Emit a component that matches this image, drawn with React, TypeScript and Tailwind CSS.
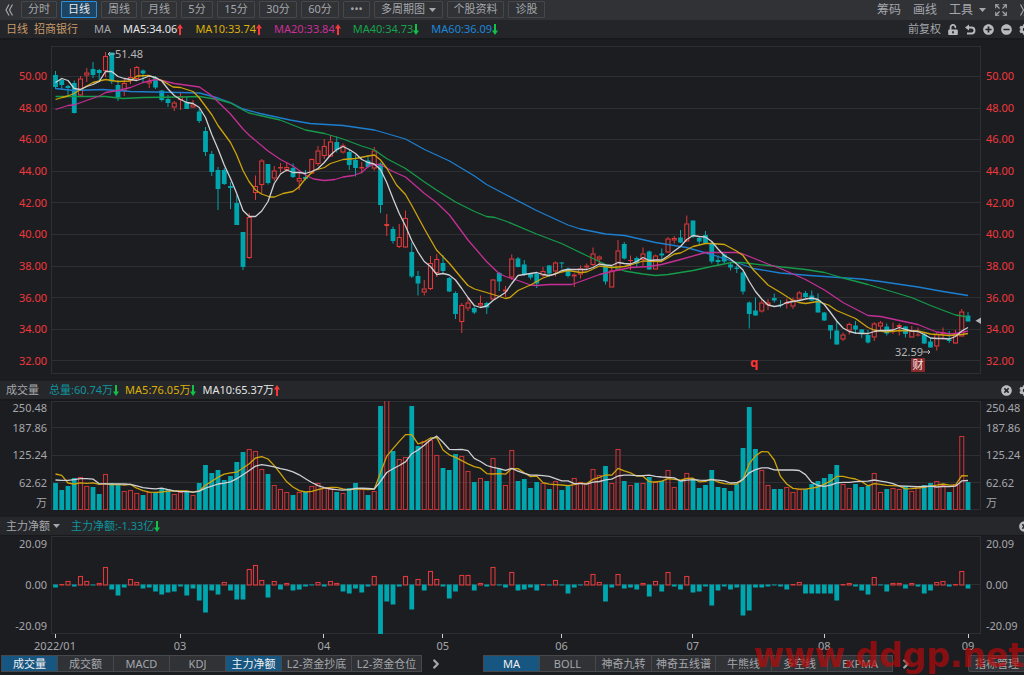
import React, { FC, ReactNode } from "react";
import { ChevronRight, Expand } from "lucide-react";
import { FaCog, FaMinusCircle, FaPlusCircle, FaTimesCircle, FaUnlockAlt } from "react-icons/fa";

const STEP = 6.25;
const FIRST = 55.5;
const LEFT = 51;
const WIDTH = 930;
const TEAL = "#00a6ae";
const RED = "#dd393b";

const xAt = (i: number) => FIRST + i * STEP;
const percent = (x: number) => `${((x - LEFT) / WIDTH) * 100}%`;

// high, body top, body bottom, low; "u" is a rising day, "d" a falling one
const candles = `
d71,75,87,89 d78,80,85,90 d85,86,88,97 d80.5,83,113,113.5 u76,78.5,95.5,97 u68,72.5,75.5,82 d62,69,75,78 d69,70,73,82
u52,56,71,77 d52.5,52.5,81.5,84 d80,85,97,101 u79,83,91,96 u68.5,77,81,84 u66,67,79,80 d69.5,70.5,73.5,83 u78,81,83.5,88
d76,77.5,87.5,89 d90.5,90.5,100,101.5 d95,99,103,107 u101,102.5,107.5,111 u93,96,100,110 d97,102,109,109 u100,104.5,107.5,108 d109,111.5,121,123
d127,131,152,156 d151,154,172,176 d167,170,189,210 d168,170,184,185 d182,186,188,209 d195,203,225,225 d232,232,267,270 u213,217,258,259
u175.5,186,193,200 u159,160.5,185,194 d164,164,183,184.5 u166,170.5,178.5,181 u163,167,168.5,172.5 u162,167,170,172 d163.5,168,177,178 u172,178,181.5,190
d170,177,179,180.5 u158.5,159,173.5,174 u146,150.5,164,166 u139,146,156,159 u135.5,141.5,156.5,157 d136.5,142,150,152.5 u143.5,145.5,152.5,153.5 d150,152,165,170
d155,160,168,176.5 u162,167,168.5,173.5 d155.5,160.5,167,168 u147,150.5,168.5,170.5 d162.5,163.5,205,213 u214,224,226,236 d226.5,229,241,243.5 u224,237,247,248
u210.5,218,247.5,248 d242.5,252,276.5,278 d271,276,283.5,295.5 u280,288.5,292.5,295.5 u256,263,289,290 u254,259,273,277 d255,263,271,273.5 d277,278,291.5,292
d291.5,293,314,319 u303,305,322,333 u297,302.5,308.5,311 d306,308,312.5,314 u295.5,303,305.5,307 d302,303,307.5,314 u279,279.5,299.5,300 d272,273,281.5,291
u286,289.5,291.5,297 u254.5,258.5,277.5,280 d257,258.5,267,267.5 d260,264.5,274.5,276 d273,274,277.5,279.5 d272.5,273.5,283.5,288 u267,271,275.5,277 d265,265.5,273.5,276.5
u261.5,262.5,271.5,276.5 d262,262.5,263.5,268.5 d267.5,268.5,276,277.5 u273.5,274.5,276.5,287 u265.5,268.5,274.5,278.5 u263.5,265.5,267.5,270.5 u247.5,253.5,265,266 u255.5,256.5,259.5,263.5
d264.5,265.5,281.5,284.5 u267.5,270.5,287.5,287.5 u240,250.5,270.5,271 d242,244,258.5,259.5 u255.5,260,261,270 d256.5,258,263.5,267 u247.5,253.5,260,266 d250.5,251.5,269.5,269.5
u254.5,255.5,269.5,269.5 d248.5,253.5,255.5,259 u237,238.5,252.5,253 u236,238,240.5,243.5 d230,237.5,242.5,243 u215.5,223.5,241.5,242 d220.5,220.5,236.5,238 d236,238,241.5,244.5
d231,235,243,244 d241,243.5,261.5,263.5 d255.5,260,262,265 d253.5,254.5,261.5,263.5 d262.5,264.5,267.5,270.5 d265.5,267.5,269,273 d271,272.5,291.5,294.5 d301.5,302.5,314,328.5
d297.5,310.5,315.5,315.5 u299.5,302.5,311.5,312.5 u299,302.5,305,310 d293.5,298,300.5,302.5 d300,304.5,305.5,307.5 u298.5,302,304,308.5 u297.5,299.5,306.5,309 u291,292.5,299.5,301
d291,293,297,298.5 d290.5,295.5,300.5,301 d293.5,300,312.5,312.5 d312,312.5,320.5,321 d325,325,330.5,339 d321.5,330.5,344.5,344.5 u332.5,334.5,339.5,341 u322.5,324,330.5,334.5
d321,325.5,329.5,334 d329,329.5,333.5,338 d330,335,342.5,343.5 u322,323.5,337.5,341 u321,322.5,326.5,330 d323.5,326.5,333.5,335.5 u322.5,330.5,332,334 u323.5,325,327,335.5
d326,326.5,334,337.5 u326,330.5,337.5,337.5 u327.5,334.5,335.5,336.5 d332.5,334.5,343.5,344 d338,341.5,347.5,347.5 u332.5,334,346.5,350.5 u327.5,332.5,334,339.5 d331,339.5,341,343
u330,333.5,343.5,344 u309,311.5,336.5,336.5 d312,315.5,321.5,321.5`
  .trim()
  .split(/\s+/)
  .map((s) => {
    const [high, top, bottom, low] = s.slice(1).split(",").map(Number);
    return { up: s[0] === "u", high, top, bottom, low };
  });

const ma5 = [
  82.5, 78.5, 80.5, 88.5, 89.5, 86.5, 84.5, 81.5, 71.5, 71.5, 76.5, 78.5, 79.5, 80.5, 78.5, 76, 77.5, 81, 89, 95.5,
  99.5, 102.5, 103.5, 107.5, 117.5, 134.5, 149, 165, 178.5, 193.5, 210.5, 216.5, 216.5, 211, 201.5, 183.5, 174, 170, 172.5, 172.5,
  173.5, 171.5, 168.5, 162.5, 155, 149.5, 146.5, 149.5, 153.5, 159.5, 162.5, 164, 169.5, 182.5, 198.5, 213.5, 226, 240.5, 252, 261.5,
  266.5, 274.5, 273.5, 275, 280, 288.5, 297.5, 305.5, 307.5, 306, 300.5, 296.5, 292.5, 283.5, 275.5, 274.5, 273.5, 272.5, 274.5, 275.5,
  274, 270.5, 269.5, 269.5, 269.5, 269.5, 267.5, 264, 265, 265.5, 262.5, 263.5, 264, 261.5, 257.5, 260.5, 260, 260, 256, 251,
  246.5, 239.5, 235.5, 236.5, 237, 241.5, 249, 255.5, 259, 264, 270, 281.5, 291.5, 299, 305, 306.5, 305.5, 302.5, 301.5, 300.5,
  299, 298, 299.5, 304.5, 312.5, 321, 328, 331.5, 333, 333.5, 333.5, 331.5, 330.5, 330.5, 330, 327.5, 329.5, 331, 331.5, 334.5,
  338, 338.5, 338.5, 339, 336.5, 331, 327.5,
];

const ma10 =
  "55.5,99.5 62,97.5 68,96 74,93.5 80.5,89.5 93,82.5 105.5,79.5 118,81.5 130,81 137,76 149,75.5 162,80.5 173,87 180.5,87.5 193,91.5 199,97.5 212,115 218,125.5 230.5,142.5 236.5,154.5 243,170.5 249,181.5 255.5,190 261.5,194 270,197 274.5,197 283,193.5 293,191.5 299,187 305.5,178.5 314,170.5 324.5,167.5 330.5,163.5 343,159.5 355.5,158.5 368,156 374.5,155 380.5,160 387,168.5 396.5,185 405.5,194.5 411.5,205 424.5,229 436.5,250 449.5,263.5 461.5,278 468,285.5 474.5,289 486.5,292.5 499.5,296.5 505.5,298.5 510,297.5 518,290.5 530.5,285 543,278 555.5,273.5 568,270.5 580.5,272.5 586.5,272 599.5,266 611.5,267.5 624.5,266.5 630.5,265 643,261 661.5,261.5 674.5,254 680.5,253 693,246.5 705.5,243.5 711.5,243.5 724.5,244.5 736.5,251 743,255.5 753.5,270 768,285 780.5,292.5 793,300.5 799,302.5 805.5,303.5 818,301.5 828.5,305 836.5,310.5 855.5,318.5 868,327.5 874,330 886.5,332 899.5,330.5 918,331 930.5,334 949.5,335.5 961.5,334.5 968,333.5";
const ma20 =
  "55.5,109.5 68,105.5 74,105 86.5,100.5 99.5,96 105.5,92.5 118,90.5 130.5,87.5 143,82.5 155.5,79.5 162,80.5 174.5,83.5 199.5,87 211.5,95.5 230.5,114 243,129 249.5,135.5 268,151 280.5,159.5 293,166 305.5,175 313.5,179 324.5,180.5 335,179.5 343,177 353.5,175.5 361.5,172.5 370,165 380.5,164.5 393,171.5 405.5,177 424.5,193.5 436.5,202.5 449.5,215 468,240 486.5,261.5 499,273.5 505.5,276.5 518,280.5 530.5,285 536.5,285.5 549.5,284.5 571.5,284.5 580.5,281.5 599.5,274.5 611.5,271.5 630.5,267.5 649.5,266.5 661.5,264.5 680.5,259.5 705.5,252.5 718,252.5 736.5,252.5 743,254 768,264 780.5,268.5 805.5,279.5 824.5,290 843,302.5 868,315.5 880.5,316.5 918,324.5 936.5,332 951.5,334 961.5,332.5 968,331";
const ma40 =
  "55.5,96.5 105.5,96.5 123,98.5 143,97.5 180.5,97 199.5,96.5 218,99.5 230.5,103 243,110 249,113 260,115.5 280,120 305.5,130 324.5,133.5 343,139 361.5,146 374.5,150 386.5,158.5 405.5,168.5 424.5,182 436.5,190 455.5,202 474.5,211.5 486.5,216.5 495,217.5 505.5,221 536.5,234 561.5,243.5 586.5,255.5 605.5,264.5 624.5,271 643,274 655.5,275.5 668,274.5 693,270.5 711.5,266.5 731.5,262.5 741,262.5 768,265.5 805.5,269.5 824.5,272.5 843,278 868,284.5 911.5,297.5 930.5,305.5 955.5,315 968,317";
const ma60 =
  "55.5,88.5 74,90.5 103,89.5 130.5,91.5 180.5,92.5 199.5,93 218,98 230.5,102.5 243,109 260,113.5 290,120 310,123.5 343,125.5 374.5,130 390,134.5 405.5,139 424.5,149.5 449.5,161 474.5,176 486.5,184.5 505.5,194.5 536.5,210.5 568,225 580.5,229 605.5,234 624.5,235.5 655.5,242.5 686.5,247.5 711.5,254.5 736.5,262.5 753.5,268.5 780,273 809.5,275.5 861.5,279 880.5,281.5 918,287 943,291.5 968,295.5";

const volumes = [
  27, 20, 24, 32, 33, 24, 23, 16, 36, 27, 26, 19, 20, 17, 15, 18, 18, 22, 21, 16, 18, 19, 15, 27, 45, 37, 40, 30, 34, 48,
  58, 61, 59, 41, 36, 25, 21, 18, 15, 18, 18, 24, 27, 22, 22, 18, 17, 22, 27, 21, 15, 19, 104, 110, 59, 51, 53, 104, 64, 69,
  70, 55, 42, 40, 56, 54, 39, 28, 32, 29, 52, 41, 25, 60, 29, 31, 22, 28, 27, 21, 29, 20, 25, 32, 28, 27, 41, 35, 44, 27,
  61, 29, 25, 27, 27, 33, 28, 29, 40, 23, 29, 37, 30, 22, 25, 40, 23, 22, 19, 26, 62, 103, 61, 40, 25, 21, 21, 23, 18, 21,
  21, 26, 29, 32, 36, 45, 26, 22, 26, 23, 24, 37, 18, 21, 22, 21, 24, 19, 24, 25, 27, 29, 25, 18, 26, 74, 28,
];
// days before the first visible one, needed for the averages
const earlier = [24, 24, 24, 24, 24, 27, 62, 37, 27];

const flows = [
  -3, 1, 4, -2, 9, 4, -1, 2, 18, -5, -11, -3, 6, 3, -4, -3, -7, -10, -8, -7, -2, -11, -4, -16, -28, -6, -10, 3, -6, -15,
  -15, 16, 20, 5, -13, 4, -5, 2, -6, -5, -2, -1, 3, -2, 4, 2, -7, -9, -4, -8, -2, 9, -50, -17, -20, -2, 9, -25, 6, -6,
  14, 6, -2, -14, -7, 10, 10, -6, 2, -2, 18, -1, -3, 13, -6, -5, -3, -6, 1, -1, 5, -1, -9, -3, -1, 4, 11, 3, -17, -3,
  11, -4, -3, -5, 2, -12, 4, -7, 13, -2, -5, 9, -8, -7, -2, -21, -6, -2, -5, -3, -31, -26, -3, -3, -2, -1, -2, -5, 1, 3,
  -9, -9, -9, -9, -9, -16, 1, 2, -2, -6, -10, 8, -1, -7, 2, 2, -4, 2, -2, -9, -6, 3, 4, -2, 1, 14, -4,
];

const linePoints = (ys: number[]) => ys.map((y, i) => `${xAt(i)},${y}`).join(" ");

const average = (days: number) => {
  const all = [...earlier, ...volumes];
  return volumes.map((_, i) => {
    const end = i + earlier.length + 1;
    return 510 - all.slice(end - days, end).reduce((a, b) => a + b, 0) / days;
  });
};

interface LineProps {
  points: string;
  color: string;
}

const Line: FC<LineProps> = ({ points, color }) => (
  <polyline points={points} fill="none" stroke={color} strokeWidth="1.3" strokeLinejoin="round" vectorEffect="non-scaling-stroke" />
);

interface BarProps {
  i: number;
  top: number;
  bottom: number;
  up: boolean;
  color?: string;
}

const Bar: FC<BarProps> = ({ i, top, bottom, up, color = RED }) => {
  const height = Math.max(bottom - top, 1);
  if (up && height > 2) {
    return <rect x={xAt(i) - 2} y={top + 0.5} width="4" height={height - 1} fill="none" stroke={color} strokeWidth="1.1" />;
  }
  return <rect x={xAt(i) - 2.4} y={top} width="4.8" height={height} fill={up ? RED : TEAL} />;
};

interface PlotProps {
  top: number;
  height: number;
  grid: number[];
  className: string;
  children: ReactNode;
}

const Plot: FC<PlotProps> = ({ top, height, grid, className, children }) => (
  <svg className={`block w-full ${className}`} viewBox={`${LEFT} ${top} ${WIDTH} ${height}`} preserveAspectRatio="none">
    {grid.map((y) => (
      <path key={y} d={`M${LEFT} ${y}H${LEFT + WIDTH}`} stroke="#2e2f33" />
    ))}
    <rect x={LEFT + 0.5} y={top + 0.5} width={WIDTH - 1} height={height - 1} fill="none" stroke="#2e2f33" />
    {children}
  </svg>
);

const Arrow: FC<{ up?: boolean }> = ({ up }) => (
  <svg viewBox="0 0 6 11" className={up ? "h-[11px] w-1.5 text-[#f5383a]" : "h-[11px] w-1.5 rotate-180 text-[#12c04a]"}>
    <path d="M3 0L6 4.5H4V11H2V4.5H0z" fill="currentColor" />
  </svg>
);

const Caret = () => (
  <svg viewBox="0 0 7 4" className="h-1 w-[7px]">
    <path d="M0 0H7L3.5 4z" fill="currentColor" />
  </svg>
);

const DoubleChevron: FC<{ className?: string }> = ({ className = "" }) => (
  <svg viewBox="0 0 8 12" className={`block h-3 w-2 ${className}`}>
    <path d="M4 .5L1 6L4 11.5M7.5 .5L4.5 6L7.5 11.5" fill="none" stroke="currentColor" strokeWidth="1.2" />
  </svg>
);

const UndoIcon = () => (
  <svg viewBox="0 0 11 11" className="block h-[11px] w-[11px]">
    <path d="M0 3.5L4 .5V6.5z" fill="currentColor" />
    <path d="M3 3.5H6.5A2.9 2.9 0 0 1 6.5 9.5H2" fill="none" stroke="currentColor" strokeWidth="1.9" />
  </svg>
);

const Value: FC<{ className: string; up?: boolean; children: ReactNode }> = ({ className, up, children }) => (
  <span className="flex items-center">
    <span className={className}>{children}</span>
    <Arrow up={up} />
  </span>
);

const periods = [
  { name: "分时", width: "w-9" },
  { name: "日线", width: "w-9", active: true },
  { name: "周线", width: "w-9" },
  { name: "月线", width: "w-9" },
  { name: "5分", width: "w-8" },
  { name: "15分", width: "w-[38px]" },
  { name: "30分", width: "w-[38px]" },
  { name: "60分", width: "w-[38px]" },
  { name: "•••", width: "w-[27px]" },
  { name: "多周期图", width: "w-[69px]", menu: true },
  { name: "个股资料", width: "w-[57px]" },
  { name: "诊股", width: "w-[37px]" },
];

const Toolbar = () => (
  <div className="flex h-5 items-start justify-between overflow-hidden bg-[#303236] pt-px">
    <div className="flex shrink-0 items-center gap-1">
      <button aria-label="收起" className="flex w-[17px] justify-center">
        <DoubleChevron />
      </button>
      {periods.map((p) => (
        <button
          key={p.name}
          className={`flex h-[17px] items-center justify-center gap-1 rounded-[1px] border ${p.width} ${
            p.active ? "border-[#2390e0] bg-[#1d4463] text-[#e8e8e8]" : "border-[#45474b]"
          }`}
        >
          {p.name}
          {p.menu && <Caret />}
        </button>
      ))}
    </div>
    <div className="-mr-1 flex h-[17px] shrink-0 items-center gap-3 text-xs">
      <button>筹码</button>
      <button>画线</button>
      <div className="flex items-center gap-2">
        <button className="flex items-center gap-1.5">
          工具 <Caret />
        </button>
        <button aria-label="全屏">
          <Expand className="block h-3.5 w-3.5" strokeWidth={2} />
        </button>
      </div>
      <button aria-label="展开">
        <DoubleChevron className="rotate-180" />
      </button>
    </div>
  </div>
);

const Averages = () => (
  <div className="flex h-5 items-center justify-between overflow-hidden border-b-2 border-[#18191c] bg-[#232529]">
    <div className="flex items-center gap-3 pl-1.5">
      <span className="flex gap-1.5 text-[#c79a68]">
        <span>日线</span>
        <span>招商银行</span>
      </span>
      <span className="ml-1">MA</span>
      <Value className="text-[#e4e4e4]" up>MA5:34.06</Value>
      <Value className="text-[#dcb007]" up>MA10:33.74</Value>
      <Value className="text-[#cb2f98]" up>MA20:33.84</Value>
      <Value className="text-[#16a34a]">MA40:34.73</Value>
      <Value className="text-[#1f86d8]">MA60:36.09</Value>
    </div>
    <div className="-mr-1.5 flex items-center gap-[7px] text-[#b8babd]">
      <button className="text-[#a5a7ab]">前复权</button>
      <button aria-label="锁定"><FaUnlockAlt className="block h-[11px] w-2.5" /></button>
      <button aria-label="撤销"><UndoIcon /></button>
      <button aria-label="放大"><FaPlusCircle className="block h-[11px] w-[11px]" /></button>
      <button aria-label="缩小"><FaMinusCircle className="block h-[11px] w-[11px]" /></button>
      <button aria-label="设置"><FaCog className="block h-[11px] w-[11px]" /></button>
    </div>
  </div>
);

const prices = ["50.00", "48.00", "46.00", "44.00", "42.00", "40.00", "38.00", "36.00", "34.00", "32.00"];

const PriceLabels: FC<{ className: string }> = ({ className }) => (
  <div className={`flex shrink-0 flex-col justify-between pt-[22px] pb-[5px] leading-4 text-[#f0383c] ${className}`}>
    {prices.map((p) => (
      <span key={p}>{p}</span>
    ))}
  </div>
);

const PriceChart = () => (
  <div className="flex pt-1.5">
    <PriceLabels className="w-[51px] pr-1 text-right" />
    <div className="relative min-w-0 flex-1">
      <Plot top={46} height={328} grid={prices.map((_, i) => Math.round(76 + i * 31.6) + 0.5)} className="h-[328px]">
        {candles.map((c, i) => (
          <g key={i}>
            <path
              d={c.up ? `M${xAt(i)} ${c.high}V${c.top}M${xAt(i)} ${c.bottom}V${c.low}` : `M${xAt(i)} ${c.high}V${c.low}`}
              stroke={c.up ? RED : TEAL}
            />
            <Bar i={i} top={c.top} bottom={c.bottom} up={c.up} />
          </g>
        ))}
        <Line points={ma60} color="#1c7fd0" />
        <Line points={ma40} color="#159b49" />
        <Line points={ma20} color="#c42f95" />
        <Line points={ma10} color="#cda30c" />
        <Line points={linePoints(ma5)} color="#cfd0d3" />
        <path d="M981 317.5V324L975.5 320.8z" fill="#b0b2b5" />
      </Plot>
      <span className="absolute top-0 flex items-center leading-4 text-[#b4b6b9]" style={{ left: percent(107) }}>
        <svg viewBox="0 0 8 6" className="h-1.5 w-2">
          <path d="M8 3H1M3 1L1 3L3 5" fill="none" stroke="currentColor" />
        </svg>
        51.48
      </span>
      <span className="absolute top-[298px] flex items-center leading-4 text-[#b4b6b9]" style={{ left: percent(895) }}>
        32.59
        <svg viewBox="0 0 8 6" className="h-1.5 w-2">
          <path d="M0 3H7M5 1L7 3L5 5" fill="none" stroke="currentColor" />
        </svg>
      </span>
      <span className="absolute top-[308px] text-[13px] leading-4 font-bold text-[#ff3333]" style={{ left: percent(750) }}>
        q
      </span>
      <span
        className="absolute top-[312px] flex h-3.5 w-3.5 items-center justify-center rounded-[1px] bg-[#8b2a2c] text-[#f0e4e4]"
        style={{ left: percent(911) }}
      >
        财
      </span>
    </div>
    <PriceLabels className="w-[43px] pl-[5px]" />
  </div>
);

const VolumeLabels: FC<{ className: string }> = ({ className }) => (
  <div className={`grid shrink-0 grid-rows-[14px_26px_28px_27px_14px] items-center leading-4 ${className}`}>
    {["250.48", "187.86", "125.24", "62.62", "万"].map((v) => (
      <span key={v}>{v}</span>
    ))}
  </div>
);

const VolumeChart = () => (
  <section>
    <div className="mt-[7px] flex h-5 items-center justify-between overflow-hidden border-b-2 border-[#18191c] bg-[#25272b]">
      <div className="flex items-center pl-1.5">
        <span className="w-[43px]">成交量</span>
        <span className="flex gap-1.5">
          <Value className="text-[#0f949c]">总量:60.74万</Value>
          <Value className="text-[#dcb007]">MA5:76.05万</Value>
          <Value className="text-[#e4e4e4]" up>MA10:65.37万</Value>
        </span>
      </div>
      <div className="-mr-1.5 flex gap-[7px] text-[#b8babd]">
        <button aria-label="关闭成交量"><FaTimesCircle className="block h-[11px] w-[11px]" /></button>
        <button aria-label="成交量设置"><FaCog className="block h-[11px] w-[11px]" /></button>
      </div>
    </div>
    <div className="flex">
      <VolumeLabels className="w-[51px] pr-1 text-right" />
      <div className="min-w-0 flex-1">
        <Plot top={401} height={109} grid={[427.5, 455.5, 482.5]} className="h-[109px]">
          {volumes.map((v, i) => (
            <Bar key={i} i={i} top={510 - v} bottom={510} up={candles[i].up} color="#c43436" />
          ))}
          <Line points={linePoints(average(5))} color="#cda30c" />
          <Line points={linePoints(average(10))} color="#cfd0d3" />
        </Plot>
      </div>
      <VolumeLabels className="w-[43px] pl-[5px]" />
    </div>
  </section>
);

const FlowLabels: FC<{ className: string }> = ({ className }) => (
  <div className={`flex shrink-0 flex-col justify-between leading-4 ${className}`}>
    <span>20.09</span>
    <span>0.00</span>
    <span>-20.09</span>
  </div>
);

const months = [
  { name: "2022/01", days: 20 },
  { name: "03", days: 23 },
  { name: "04", days: 19 },
  { name: "05", days: 19 },
  { name: "06", days: 21 },
  { name: "07", days: 21 },
  { name: "08", days: 23 },
  { name: "09", days: 0 },
];

const FlowChart = () => (
  <section>
    <div className="mt-[7px] flex h-[19px] items-center justify-between overflow-hidden border-b border-[#18191c] bg-[#25272b]">
      <div className="flex items-center gap-[11px] pl-1.5">
        <button className="flex items-center gap-[3px]">
          主力净额 <Caret />
        </button>
        <Value className="text-[#0f949c]">主力净额:-1.33亿</Value>
      </div>
      <button aria-label="关闭主力净额" className="-mr-1.5 text-[#b8babd]">
        <FaTimesCircle className="block h-[11px] w-[11px]" />
      </button>
    </div>
    <div className="flex">
      <FlowLabels className="w-[51px] pr-1 text-right" />
      <div className="min-w-0 flex-1">
        <Plot top={536} height={98} grid={[584.5]} className="h-[98px]">
          {flows.map((v, i) => (
            <Bar key={i} i={i} top={v > 0 ? 585 - v : 584.5} bottom={v > 0 ? 585.5 : 584.5 - v} up={v > 0} />
          ))}
        </Plot>
      </div>
      <FlowLabels className="w-[43px] pl-[5px]" />
    </div>
    <div className="flex h-[21px] pr-14 pl-[55px]">
      {months.map((m) => (
        <div key={m.name} className="flex" style={{ flexGrow: m.days, flexBasis: 0 }}>
          <div className="flex w-0 flex-col items-center">
            <span className="h-1 w-px shrink-0 bg-[#d0d1d3]" />
            <span className="leading-4 whitespace-nowrap">{m.name}</span>
          </div>
        </div>
      ))}
    </div>
  </section>
);

const panels = [
  { name: "成交量", width: "w-14", active: true },
  { name: "成交额", width: "w-14" },
  { name: "MACD", width: "w-14" },
  { name: "KDJ", width: "w-14" },
  { name: "主力净额", width: "w-14", active: true },
  { name: "L2-资金抄底", width: "w-[70px]" },
  { name: "L2-资金仓位", width: "w-[70px]" },
];

const overlays = [
  { name: "MA", width: "w-14", active: true },
  { name: "BOLL", width: "w-14" },
  { name: "神奇九转", width: "w-14" },
  { name: "神奇五线谱", width: "w-16" },
  { name: "牛熊线", width: "w-14" },
  { name: "多空线", width: "w-14" },
  { name: "EXPMA", width: "w-[65px]" },
];

const Tabs: FC<{ items: { name: string; width: string; active?: boolean }[] }> = ({ items }) => (
  <div className="flex shrink-0 border-y border-l border-[#46484c]">
    {items.map((t) => (
      <button
        key={t.name}
        className={`h-[15px] border-r border-[#46484c] leading-[15px] whitespace-nowrap ${t.width} ${
          t.active ? "bg-[#185682] text-[#f0f0f0]" : "bg-[#303236]"
        }`}
      >
        {t.name}
      </button>
    ))}
  </div>
);

const Footer = () => (
  <div className="flex items-center overflow-hidden pl-px">
    <Tabs items={panels} />
    <button aria-label="更多副图" className="flex w-[27px] shrink-0 justify-center">
      <ChevronRight className="h-3.5 w-3.5" strokeWidth={4} />
    </button>
    <div className="ml-[34px] flex shrink-0 items-center">
      <Tabs items={overlays} />
      <button aria-label="更多主图" className="flex w-[25px] justify-center">
        <ChevronRight className="h-3.5 w-3.5" strokeWidth={4} />
      </button>
    </div>
    <button className="-mr-1 ml-auto h-[17px] w-[60px] shrink-0 rounded-[2px] border border-[#46484c] bg-[#303236] pr-0.5 leading-[15px]">
      指标管理
    </button>
  </div>
);

export default function App() {
  return (
    <main className="relative min-h-screen overflow-hidden bg-[#1c1d21] font-['Noto_Sans','Noto_Sans_CJK_SC',sans-serif] text-[11px] text-[#a5a7ab]">
      <Toolbar />
      <Averages />
      <PriceChart />
      <VolumeChart />
      <FlowChart />
      <Footer />
      <div className="pointer-events-none absolute top-[636px] right-0 font-['DejaVu_Sans',sans-serif] text-[33px] leading-10 font-bold text-[#b80a0a]/70">
        www.ddgp.net
      </div>
    </main>
  );
}
